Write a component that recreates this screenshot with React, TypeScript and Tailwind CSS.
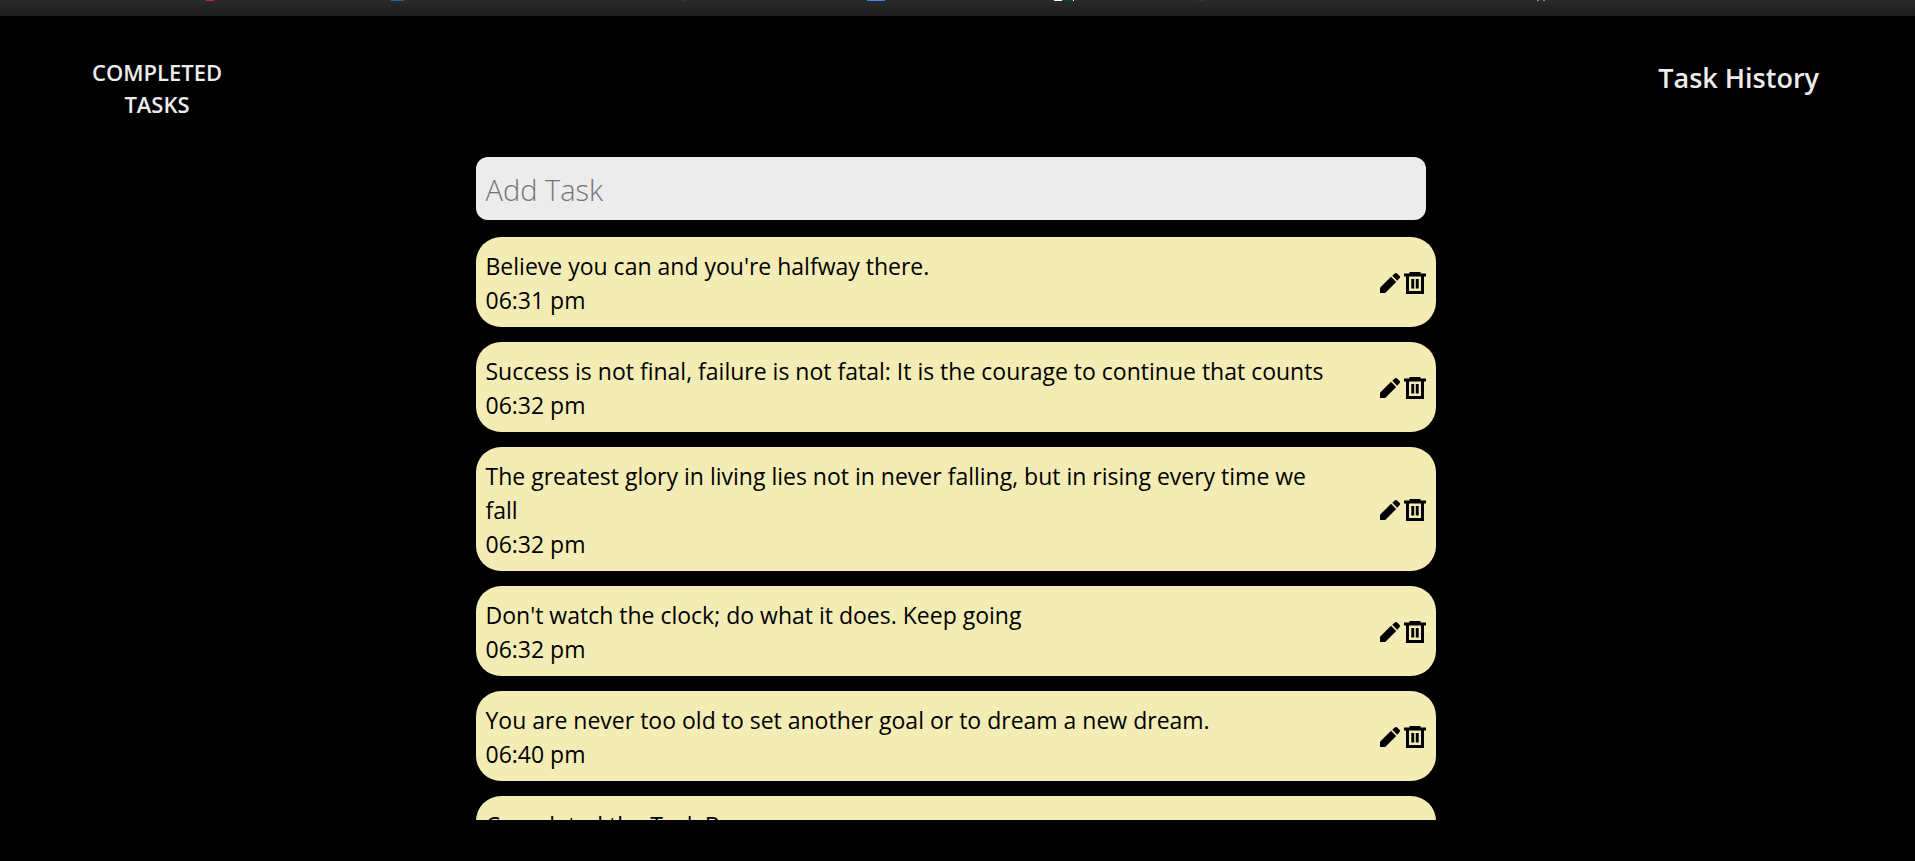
const TASKS = [
  { text: "Believe you can and you're halfway there.", time: "06:31 pm" },
  { text: "Success is not final, failure is not fatal: It is the courage to continue that counts", time: "06:32 pm" },
  { text: "The greatest glory in living lies not in never falling, but in rising every time we fall", time: "06:32 pm" },
  { text: "Don't watch the clock; do what it does. Keep going", time: "06:32 pm" },
  { text: "You are never too old to set another goal or to dream a new dream.", time: "06:40 pm" },
  { text: "Completed the Task B", time: "06:45 pm" },
];

function PencilIcon() {
  return (
    <svg viewBox="0 0 20 20" className="size-5" fill="currentColor" aria-hidden="true">
      <path d="M0 14.8V20h5.2L16.2 9 11 3.8 0 14.8z" />
      <path d="M19.4 5.3a1.8 1.8 0 0 0 0-2.5L17.2.6a1.8 1.8 0 0 0-2.5 0l-2.4 2.2 4.9 4.9 2.2-2.4z" />
    </svg>
  );
}

function TrashIcon() {
  return (
    <svg viewBox="0 0 22 22" className="size-[22px]" fill="currentColor" aria-hidden="true">
      <path d="M5.5 0h11v1.5H22V4.5h-2V22H2V4.5H0v-3h5.5V0zM5 4.5v14.5h12V4.5H5z" fillRule="evenodd" />
      <path d="M7.3 7h2.9v9.5H7.3zM11.8 7h2.9v9.5h-2.9z" />
    </svg>
  );
}

function BrowserStrip() {
  return (
    <svg className="block h-4 w-full bg-linear-to-b from-[#2a2a2a] to-[#1c1c1c]" aria-hidden="true">
      <rect x="206" width="8" height="1" fill="#d81f2a" />
      <rect x="391" width="13" height="1" fill="#17699f" />
      <rect x="681" width="5" height="1" fill="#17443f" />
      <rect x="867" width="18" height="1" fill="#4285f4" />
      <rect x="1054" width="8" height="1" fill="#ffffff" />
      <rect x="1062" width="11" height="1" fill="#0b3f56" />
      <rect x="1073" width="1" height="1" fill="#ffffff" />
      <rect x="1199" width="6" height="1" fill="#17443f" />
      <rect x="1537" width="2" height="1" fill="#8a8a8a" />
      <rect x="1543" width="2" height="1" fill="#8a8a8a" />
    </svg>
  );
}

export default function App() {
  return (
    <div className="flex h-screen flex-col bg-black font-['Open_Sans','Noto_Sans',sans-serif] text-black">
      <BrowserStrip />
      <div className="flex min-h-0 flex-1 flex-col pr-1">
        <header className="flex items-start justify-between px-[92px] pt-10 text-[#ececec]">
          <h2 className="w-[130px] text-center text-[22px] leading-8 font-semibold">
            COMPLETED TASKS
          </h2>
          <a href="#history" className="pt-1 text-[27px] leading-9 font-semibold">
            Task History
          </a>
        </header>
        <main className="mx-auto mt-[37px] mb-[41px] flex min-h-0 w-[960px] max-w-full flex-1 flex-col">
          <input
            aria-label="Add Task"
            placeholder="Add Task"
            className="mr-[10px] h-[63px] shrink-0 rounded-xl bg-[#ececec] px-[10px] pt-[2px] text-[29px] font-light outline-none placeholder:text-[#757575]"
          />
          <ul className="mt-[17px] flex min-h-0 flex-col gap-[15px] overflow-hidden">
            {TASKS.map((task) => (
              <li
                key={task.text}
                className="flex shrink-0 items-center justify-between gap-12 rounded-[25px] bg-[#f4ecb5] px-[10px] pt-3 pb-[10px]"
              >
                <div className="text-[23px] leading-[34px]">
                  <p>{task.text}</p>
                  <p>{task.time}</p>
                </div>
                <div className="flex shrink-0 items-center gap-1">
                  <button aria-label="Edit task"><PencilIcon /></button>
                  <button aria-label="Delete task"><TrashIcon /></button>
                </div>
              </li>
            ))}
          </ul>
        </main>
      </div>
    </div>
  );
}
